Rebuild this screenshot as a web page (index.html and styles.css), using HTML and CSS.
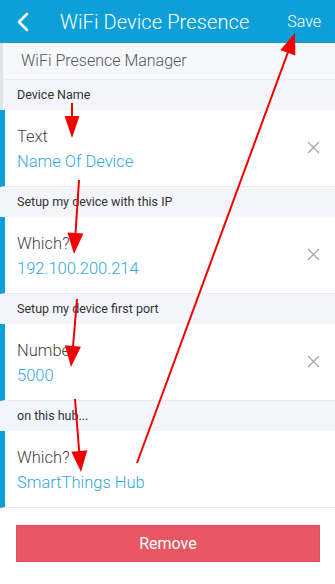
FILE: index.html
```html
<!DOCTYPE html>
<html lang="en">
<head>
    <meta charset="UTF-8">
    <meta name="viewport" content="width=device-width, initial-scale=1.0">
    <title>WiFi Device Presence</title>
    <link rel="stylesheet" href="styles.css">
</head>
<body>
    <div class="screen">
        <div class="appbar">
            <svg class="back" width="14" height="20" viewBox="0 0 14 20"><path d="M11 2 L3 10 L11 18" fill="none" stroke="#fff" stroke-width="2.6" stroke-linecap="round" stroke-linejoin="round"/></svg>
            <div class="appbar-title">WiFi Device Presence</div>
            <div class="appbar-save">Save</div>
        </div>

        <div class="page">
            <div class="page-title">WiFi Presence Manager</div>

            <div class="section section-first">Device Name</div>
            <div class="row">
                <div class="row-text">
                    <div class="row-label">Text</div>
                    <div class="row-value">Name Of Device</div>
                </div>
                <svg class="clear" width="13" height="13" viewBox="0 0 13 13"><path d="M1 1 L12 12 M12 1 L1 12" stroke="#a8a8a8" stroke-width="1.4"/></svg>
            </div>

            <div class="section">Setup my device with this IP</div>
            <div class="row">
                <div class="row-text">
                    <div class="row-label">Which?</div>
                    <div class="row-value">192.100.200.214</div>
                </div>
                <svg class="clear" width="13" height="13" viewBox="0 0 13 13"><path d="M1 1 L12 12 M12 1 L1 12" stroke="#a8a8a8" stroke-width="1.4"/></svg>
            </div>

            <div class="section">Setup my device first port</div>
            <div class="row">
                <div class="row-text">
                    <div class="row-label">Number</div>
                    <div class="row-value">5000</div>
                </div>
                <svg class="clear" width="13" height="13" viewBox="0 0 13 13"><path d="M1 1 L12 12 M12 1 L1 12" stroke="#a8a8a8" stroke-width="1.4"/></svg>
            </div>

            <div class="section">on this hub...</div>
            <div class="row">
                <div class="row-text">
                    <div class="row-label">Which?</div>
                    <div class="row-value">SmartThings Hub</div>
                </div>
            </div>

            <div class="actions">
                <button class="remove">Remove</button>
            </div>
        </div>

        <!-- annotation arrows drawn over the screenshot -->
        <svg class="arrows" width="335" height="584" viewBox="0 0 335 584">
            <g stroke="#f20000" stroke-width="2" fill="#f20000">
                <line x1="72" y1="103" x2="72" y2="118"/>
                <polygon points="64.5,116 79.5,116 72,138" stroke="none"/>
                <line x1="79" y1="180" x2="75.4" y2="235"/>
                <polygon points="83.4,233.5 67.4,232.5 74,254" stroke="none"/>
                <line x1="77" y1="299" x2="72.9" y2="348"/>
                <polygon points="80.9,346.7 64.9,345.3 71,367" stroke="none"/>
                <line x1="75" y1="399" x2="79.3" y2="453"/>
                <polygon points="87.3,450.3 71.3,451.7 81,472" stroke="none"/>
                <line x1="137" y1="463" x2="287.8" y2="52.7"/>
                <polygon points="295.3,55.5 280.3,49.9 295,33" stroke="none"/>
            </g>
        </svg>
    </div>
</body>
</html>
```

FILE: styles.css
```css
body {
    margin: 0;
    font-family: Roboto, "Noto Sans", sans-serif;
    background-color: #ffffff;
}
.screen {
    position: relative;
    width: 335px;
    height: 584px;
    overflow: hidden;
}
.appbar {
    display: flex;
    align-items: center;
    height: 43px;
    background-color: #0d9fd8;
    color: #ffffff;
    padding: 0 14px 0 16px;
}
.back {
    flex: none;
    margin-top: 1px;
}
.appbar-title {
    flex: 1;
    font-size: 20px;
    font-weight: 300;
    margin-left: 30px;
    letter-spacing: 0.1px;
}
.appbar-save {
    font-size: 16px;
    font-weight: 300;
}
.page-title {
    height: 36px;
    line-height: 36px;
    padding-left: 18px;
    font-size: 16px;
    font-weight: 300;
    color: #555555;
    background-color: #f7f8fc;
    border-left: 3px solid #dfe3e8;
    border-bottom: 1px solid #e8ebf0;
}
.section {
    height: 30px;
    line-height: 30px;
    padding-left: 17px;
    font-size: 12.5px;
    color: #333333;
    background-color: #f3f5fa;
}
.section-first {
    padding-left: 14px;
    border-left: 3px solid #dfe3e8;
}
.row {
    display: flex;
    align-items: center;
    height: 76px;
    border-left: 5px solid #0d9fd8;
    border-bottom: 1px solid #e8ebf0;
    background-color: #ffffff;
    padding: 0 15px 0 12px;
}
.row-text {
    flex: 1;
    padding-top: 1px;
}
.row-label {
    font-size: 16.5px;
    font-weight: 300;
    line-height: 25px;
    color: #444444;
}
.row-value {
    font-size: 16.5px;
    font-weight: 300;
    line-height: 25px;
    color: #2fa8dc;
}
.clear {
    flex: none;
    margin-top: -2px;
}
.actions {
    padding: 17px 15px 22px 16px;
    background-color: #ffffff;
}
.remove {
    display: block;
    width: 100%;
    height: 37px;
    border: 1px solid #e5505f;
    background-color: #e85664;
    color: #ffffff;
    font-family: Roboto, "Noto Sans", sans-serif;
    font-size: 16px;
}
.arrows {
    position: absolute;
    left: 0;
    top: 0;
    pointer-events: none;
}
```
